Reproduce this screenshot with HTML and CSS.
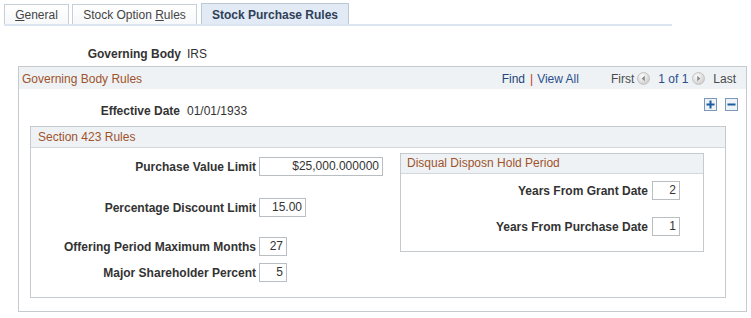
FILE: index.html
```html
<!DOCTYPE html>
<html lang="en">
<head>
<meta charset="utf-8">
<title>Stock Purchase Rules</title>
<link rel="stylesheet" href="styles.css">
</head>
<body>
<div class="tabs">
  <div class="tab tab-general"><u>G</u>eneral</div>
  <div class="tab tab-option">Stock Option <u>R</u>ules</div>
  <div class="tab tab-purchase active">Stock Purchase Rules</div>
</div>

<div class="field gb-field">
  <span class="lbl gb-lbl">Governing Body</span>
  <span class="val">IRS</span>
</div>

<div class="group outer">
  <div class="ghead outer-head">
    <span class="gtitle">Governing Body Rules</span>
    <div class="nav">
      <span class="link dark">Find</span><span class="sep">|</span><span class="link">View All</span>
      <span class="nav-first">First</span>
      <svg class="arrow" width="13" height="13" viewBox="0 0 13 13"><defs><radialGradient id="ga" cx="40%" cy="35%" r="70%"><stop offset="0" stop-color="#ffffff"/><stop offset="1" stop-color="#c9c9c9"/></radialGradient></defs><circle cx="6.5" cy="6.5" r="6" fill="url(#ga)" stroke="#c4c4c4"/><path d="M7.8 3.8 L4.6 6.5 L7.8 9.2 Z" fill="#8a8a8a"/></svg>
      <span class="link count">1 of 1</span>
      <svg class="arrow" width="13" height="13" viewBox="0 0 13 13"><defs><radialGradient id="gb" cx="40%" cy="35%" r="70%"><stop offset="0" stop-color="#ffffff"/><stop offset="1" stop-color="#c9c9c9"/></radialGradient></defs><circle cx="6.5" cy="6.5" r="6" fill="url(#gb)" stroke="#c4c4c4"/><path d="M5.2 3.8 L8.4 6.5 L5.2 9.2 Z" fill="#8a8a8a"/></svg>
      <span class="nav-last">Last</span>
    </div>
  </div>

  <div class="outer-body">
    <div class="field eff-field">
      <span class="lbl eff-lbl">Effective Date</span>
      <span class="val">01/01/1933</span>
    </div>
    <div class="addrem">
      <svg class="rowbtn" width="13" height="13" viewBox="0 0 13 13"><rect x="0.5" y="0.5" width="12" height="12" fill="#eef3f8" stroke="#7d97b5"/><path d="M6.5 2.5 V10.5 M2.5 6.5 H10.5" stroke="#1f5d9e" stroke-width="2"/></svg>
      <svg class="rowbtn" width="13" height="13" viewBox="0 0 13 13"><rect x="0.5" y="0.5" width="12" height="12" fill="#eef3f8" stroke="#7d97b5"/><path d="M2.5 6.5 H10.5" stroke="#1f5d9e" stroke-width="2"/></svg>
    </div>
  </div>

  <div class="group section">
    <div class="ghead sec-head">
      <span class="gtitle">Section 423 Rules</span>
    </div>
    <div class="sec-body">
      <div class="left-col">
        <div class="frow r1">
          <span class="lbl left-lbl">Purchase Value Limit</span>
          <span class="inp w-wide">$25,000.000000</span>
        </div>
        <div class="frow r2">
          <span class="lbl left-lbl">Percentage Discount Limit</span>
          <span class="inp w-mid">15.00</span>
        </div>
        <div class="frow r3">
          <span class="lbl left-lbl">Offering Period Maximum Months</span>
          <span class="inp w-small">27</span>
        </div>
        <div class="frow r4">
          <span class="lbl left-lbl">Major Shareholder Percent</span>
          <span class="inp w-small">5</span>
        </div>
      </div>

      <div class="group disqual">
        <div class="ghead dq-head">
          <span class="gtitle">Disqual Disposn Hold Period</span>
        </div>
        <div class="dq-body">
          <div class="frow">
            <span class="lbl dq-lbl">Years From Grant Date</span>
            <span class="inp w-small">2</span>
          </div>
          <div class="frow dq-r2">
            <span class="lbl dq-lbl">Years From Purchase Date</span>
            <span class="inp w-small">1</span>
          </div>
        </div>
      </div>
    </div>
  </div>
</div>
</body>
</html>
```
FILE: styles.css
```css
* { box-sizing: border-box; }

body {
  margin: 0;
  background: #ffffff;
  font-family: "Liberation Sans", Arial, sans-serif;
  font-size: 12px;
  color: #333333;
}

/* Tabs */
.tabs {
  display: flex;
  align-items: flex-end;
  gap: 3px;
  margin: 3px 0 0 4px;
  width: 668px;
  height: 23px;
  border-bottom: 2px solid #dbe5f2;
}
.tab {
  height: 20px;
  padding-top: 1px;
  line-height: 18px;
  text-align: center;
  border: 1px solid #c6ced8;
  border-bottom: none;
  background: linear-gradient(#ffffff, #f6f8fa);
  color: #444444;
  white-space: nowrap;
}
.tab u { text-decoration: underline; }
.tab-general { width: 65px; }
.tab-option { width: 125px; }
.tab-purchase { width: 148px; margin-left: 1px; }
.tab.active {
  height: 21px;
  padding-top: 2px;
  background: #e2eaf5;
  border-color: #bcc8d6;
  font-weight: bold;
  color: #2f4058;
}

/* Simple label/value fields */
.field {
  display: flex;
  line-height: 16px;
}
.lbl {
  font-weight: bold;
  color: #333333;
  text-align: right;
  white-space: nowrap;
}
.gb-field { margin-top: 20px; }
.gb-lbl { width: 181px; margin-right: 6px; }
.val { color: #333333; }

/* Group boxes */
.group {
  border: 1px solid #c5cacf;
  background: #ffffff;
}
.ghead {
  background: #eef2f4;
  display: flex;
  align-items: center;
  justify-content: space-between;
}
.gtitle { color: #a0522d; white-space: nowrap; }

.outer {
  margin: 4px 0 0 18px;
  width: 729px;
}
.outer-head {
  height: 22px;
  padding: 1px 10px 0 3px;
}
.nav {
  display: flex;
  align-items: center;
  white-space: nowrap;
}
.link { color: #2b4f8c; }
.link.dark { color: #23457a; }
.sep { color: #c23b2e; padding: 0 4px 0 5px; }
.nav-first { color: #4a4a4a; margin-left: 32px; margin-right: 3px; }
.count { margin: 0 4px 0 8px; }
.nav-last { color: #4a4a4a; margin-left: 8px; }
.arrow { display: block; }

.outer-body {
  display: flex;
  justify-content: space-between;
  align-items: flex-start;
  padding: 9px 8px 0 0;
}
.eff-field { margin-top: 5px; }
.eff-lbl { width: 161px; margin-right: 7px; }
.addrem { display: flex; gap: 8px; }
.rowbtn { display: block; }

/* Section 423 */
.section {
  margin: 7px 20px 13px 11px;
}
.sec-head {
  height: 21px;
  line-height: 20px;
  padding-left: 7px;
  border-bottom: 1px solid #d3d8dc;
}
.sec-body {
  display: flex;
  align-items: flex-start;
}
.left-col {
  width: 369px;
  padding: 9px 0 15px 0;
}
.frow {
  display: flex;
  align-items: center;
  height: 19px;
}
.left-lbl { width: 225px; margin-right: 3px; }
.r2 { margin-top: 22px; }
.r3 { margin-top: 20px; }
.r4 { margin-top: 7px; }

.inp {
  display: block;
  height: 19px;
  line-height: 17px;
  border: 1px solid #b9bec3;
  background: #ffffff;
  text-align: right;
  padding-right: 3px;
  color: #333333;
}
.w-wide { width: 124px; }
.w-mid { width: 47px; }
.w-small { width: 28px; }

/* Disqual box */
.disqual {
  width: 304px;
  margin-top: 5px;
}
.dq-head {
  height: 20px;
  line-height: 19px;
  padding-left: 6px;
  border-bottom: 1px solid #d3d8dc;
}
.dq-body {
  padding: 7px 0 15px 0;
}
.dq-lbl { width: 247px; margin-right: 4px; }
.dq-r2 { margin-top: 17px; }
```
